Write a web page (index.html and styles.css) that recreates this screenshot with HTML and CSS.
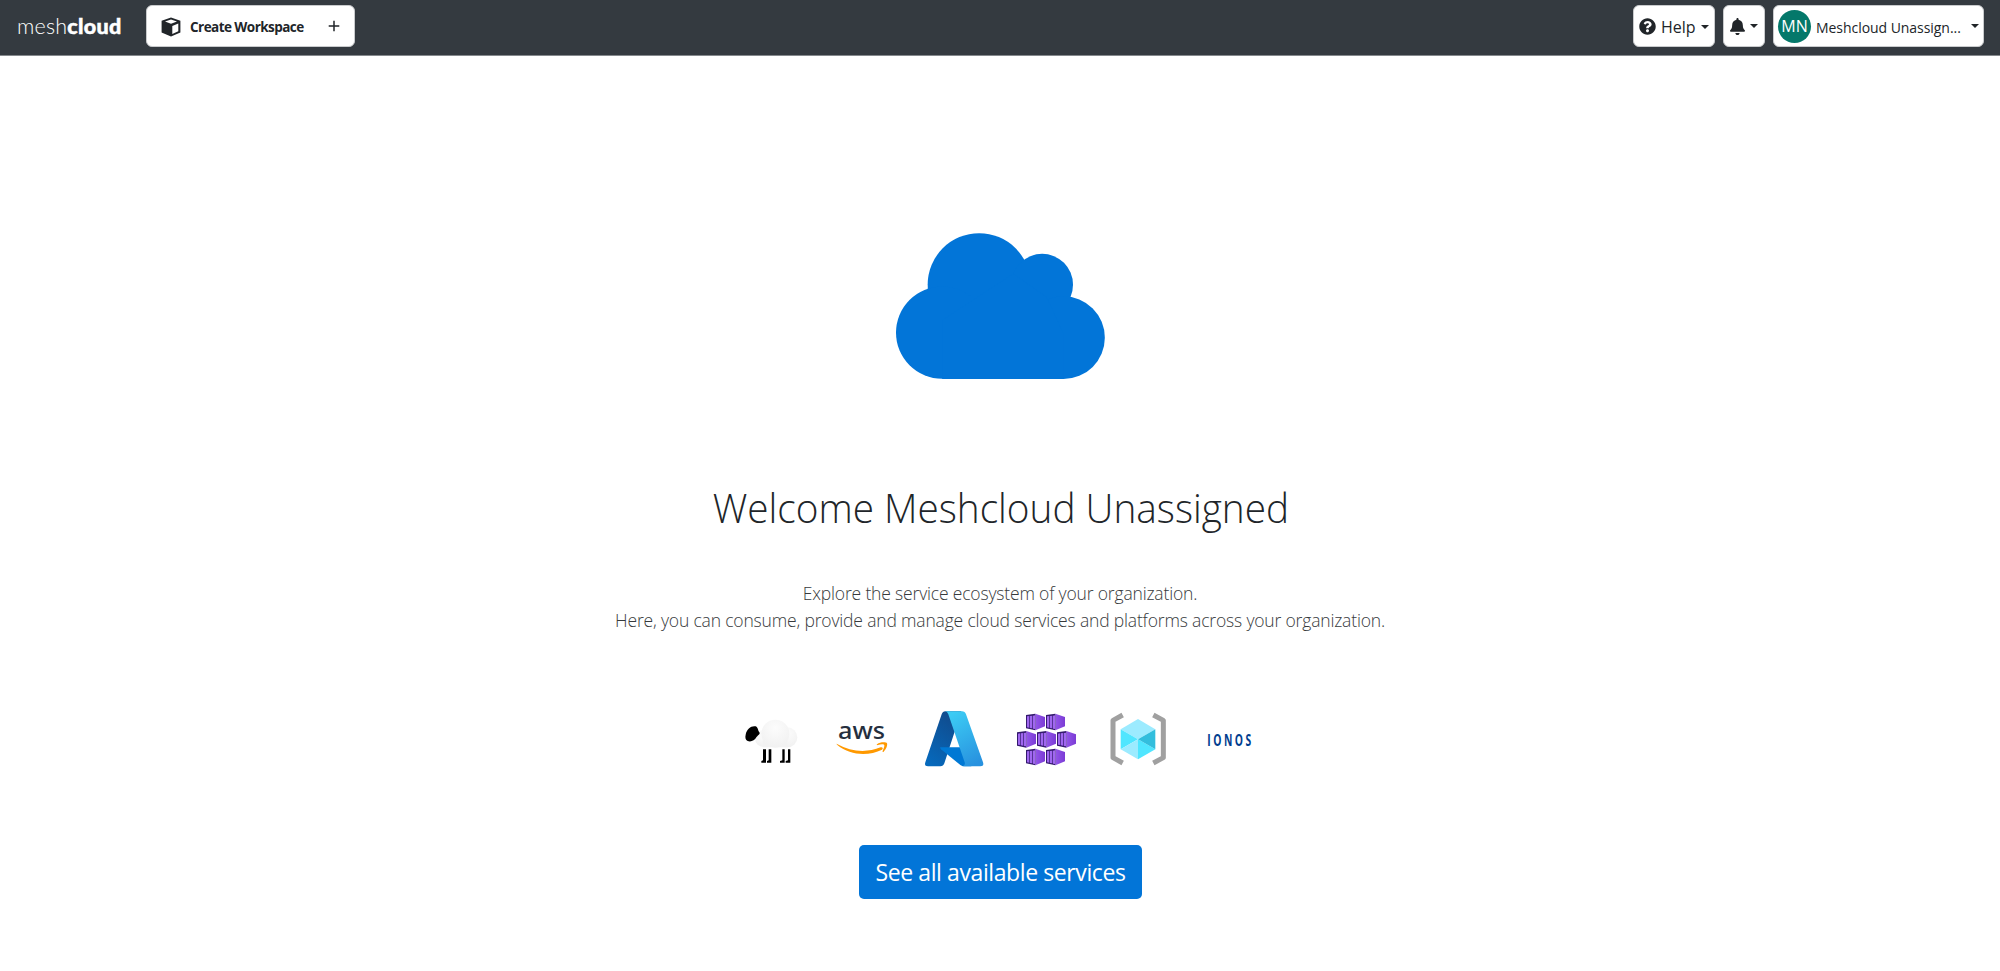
FILE: index.html
```html
<!DOCTYPE html>
<html lang="en">
<head>
<meta charset="utf-8">
<title>meshcloud</title>
<link rel="stylesheet" href="styles.css">
</head>
<body>
<header class="nav">
  <a class="logo"><span class="logo-thin">mesh</span><span class="logo-bold">cloud</span></a>
  <button class="chip workspace">
    <svg class="cube" viewBox="0 0 20 20"><path fill="#212529" d="M10 .6 19.4 3.800V15.600L10 19.500.6 15.600V3.800Z"/><path fill="#fff" d="M10 2.500 16 4.500 10 6.800 4 4.500ZM11.300 9 17.300 6.500V14.300L11.300 16.900Z"/></svg>
    <span class="workspace-label">Create Workspace</span>
    <svg class="plus" viewBox="0 0 12 12"><path d="M6 .7V11.300M.7 6H11.300" stroke="#212529" stroke-width="1.500"/></svg>
  </button>
  <div class="nav-right">
    <button class="chip help">
      <svg class="help-icon" viewBox="0 0 512 512"><path fill="#212529" d="M504 256c0 137-111 248-248 248S8 393 8 256C8 119.100 119 8 256 8s248 111.100 248 248zM262.700 90c-54.500 0-89.300 23-116.500 63.800-3.500 5.300-2.400 12.400 2.700 16.300l34.700 26.300c5.200 3.900 12.600 3 16.700-2.100 17.900-22.700 30.100-35.800 57.300-35.800 20.400 0 45.700 13.100 45.700 33 0 15-12.400 22.700-32.500 34C247 238.500 216 255 216 296v4c0 6.600 5.400 12 12 12h56c6.600 0 12-5.400 12-12v-1.300c0-28.800 84.200-30 84.200-108C380.200 132 319.200 90 262.700 90zM256 338c-25.400 0-46 20.600-46 46s20.600 46 46 46 46-20.600 46-46-20.600-46-46-46z"/></svg>
      <span class="help-label">Help</span><i class="caret"></i>
    </button>
    <button class="chip alerts">
      <svg class="bell" viewBox="0 0 448 512"><path fill="#212529" d="M224 512c35.300 0 63.900-28.700 63.900-64H160.100c0 35.300 28.600 64 63.900 64zm215.400-149.700c-19.300-20.800-55.500-52-55.500-154.300 0-77.700-54.500-139.900-127.900-155.200V32c0-17.700-14.300-32-32-32s-32 14.300-32 32v20.800C118.600 68.100 64.100 130.300 64.100 208c0 102.300-36.200 133.500-55.500 154.300C2.600 368.700 0 376.400 0 384c.1 16.400 13 32 32.100 32h383.800c19.100 0 32-15.600 32.100-32 0-7.600-2.600-15.300-8.600-21.700z"/></svg>
      <i class="caret"></i>
    </button>
    <button class="chip user">
      <span class="avatar">MN</span><span class="user-name">Meshcloud Unassign...</span><i class="caret"></i>
    </button>
  </div>
</header>
<main class="welcome">
  <svg class="cloud" viewBox="49 38 626 438" fill="#0275d8"><circle cx="298" cy="193" r="154.500"/><circle cx="487" cy="193" r="92.500"/><circle cx="187" cy="337" r="138.500"/><circle cx="551" cy="352" r="124"/><path d="M187 476V300L400 160L500 230L551 340V476Z"/></svg>
  <h1 class="title">Welcome Meshcloud Unassigned</h1>
  <p class="lead"><span class="line-one">Explore the service ecosystem of your organization.</span><br><span class="line-two">Here, you can consume, provide and manage cloud services and platforms across your organization.</span></p>
  <div class="platforms">
    <svg class="platform" viewBox="33 27 180 180">
      <defs><radialGradient id="wool" cx=".5" cy=".3" r=".7"><stop offset="0" stop-color="#fcfcfc"/><stop offset="1" stop-color="#f1f1f1"/></radialGradient></defs>
      <g fill="url(#wool)"><circle cx="172" cy="112" r="30"/><circle cx="100" cy="116" r="25"/><path d="M98 118H172V142H98Z" fill="#f2f2f2"/><circle cx="136" cy="101" r="42"/></g>
      <path d="M47 104C50 86 65 76 77 79C85 82 83 92 89 98C90 104 82 106 79 112C74 122 62 127 53 123C46 120 45 112 47 104Z"/>
      <path d="M99 148H108V188H94V183L99 181ZM116 148H124V188H111V183L116 181ZM157 148H164V188H150V183L157 181ZM174 148H181V188H167V183L174 181Z"/>
    </svg>
    <svg class="platform" viewBox="309 27 180 180">
      <text class="aws-word" x="327" y="117" textLength="141" lengthAdjust="spacingAndGlyphs">aws</text>
      <path fill="#f90" d="M324 132C367 156 413 159 455 142C460 140 464 145 459 149C420 168 365 168 325 135C322 132 322 130 324 132Z"/><path fill="#f90" d="M444 133C454 125 472 126 474 130C476 135 472 148 464 155C462 157 460 156 461 153C464 145 468 136 465 134C462 132 453 133 447 135C444 136 442 135 444 133Z"/>
    </svg>
    <svg class="platform" viewBox="43 27 180 180">
      <defs><linearGradient id="az1" x1=".7" y1="0" x2=".2" y2="1"><stop offset="0" stop-color="#114a8b"/><stop offset="1" stop-color="#0669bc"/></linearGradient><linearGradient id="az2" x1=".3" y1="0" x2=".7" y2="1"><stop offset="0" stop-color="#3ccbf4"/><stop offset="1" stop-color="#2892df"/></linearGradient></defs>
      <path fill="url(#az1)" d="M107 34H155L104 190Q101 199 92 199H55Q43 199 47 187L96 43Q99 34 107 34Z"/>
      <path fill="#0078d4" d="M92 142H171L185 199H164Q157 199 152 195L94 148Q90 142 92 142Z"/>
      <path fill="url(#az2)" d="M106 34H157Q166 34 169 43L220 187Q224 199 212 199H156Q168 196 165 187L116 43Q113 34 106 34Z"/>
    </svg>
    <svg class="platform" viewBox="318 27 180 180">
      <defs><linearGradient id="box" x1="0" x2="1"><stop offset="0" stop-color="#9256e8"/><stop offset="1" stop-color="#7b3bd5"/></linearGradient>
      <g id="container"><path fill="url(#box)" d="M28 0 57 10V38L28 50Z"/><path fill="#341a6e" d="M0 4 28 0V50L0 44Z"/><path fill="#a067f0" d="M3 8 10 7V42L3 41ZM12 7 19 6V44L12 43ZM21 6 27 5V46L21 45Z"/></g></defs>
      <use href="#container" x="348" y="41"/><use href="#container" x="408" y="41"/><use href="#container" x="321" y="93"/><use href="#container" x="381" y="93"/><use href="#container" x="441" y="93"/><use href="#container" x="348" y="146"/><use href="#container" x="408" y="146"/>
    </svg>
    <svg class="platform" viewBox="54 27 180 180">
      <path fill="none" stroke="#a0a0a0" stroke-width="15" stroke-linejoin="round" d="M98 45 69 61V173L98 189M190 45 220 61V173L190 189"/>
      <path fill="#9cebff" d="M144 57 196 88 144 118 92 88Z"/><path fill="#50e6ff" d="M92 88 144 118 92 148Z"/><path fill="#9cebff" d="M92 148 144 118V178Z"/><path fill="#50e6ff" d="M144 118 196 148 144 178Z"/><path fill="#32bedd" d="M196 88V148L144 118Z"/>
    </svg>
    <svg class="platform" viewBox="330 27 180 180">
      <text class="ionos-word" transform="translate(355 138) scale(.62 1)" textLength="212" lengthAdjust="spacing">IONOS</text>
    </svg>
  </div>
  <button class="cta"><span class="cta-label">See all available services</span></button>
</main>
</body>
</html>
```
FILE: styles.css
```css
* { box-sizing: border-box; }
body { margin: 0; background: #fff; color: #212529; font-family: "Open Sans", "Noto Sans", sans-serif; }
button { font: inherit; color: inherit; border: 0; padding: 0; }
.nav { height: 56px; padding: 5.400px 16px 0 17px; display: flex; align-items: flex-start; background: #343a40; border-bottom: 1px solid #85898d; }
.logo { width: 129px; height: 42px; display: flex; align-items: center; color: #fff; font: 21.500px/42px Lato, sans-serif; }
.logo-thin { font-weight: 300; letter-spacing: .2px; }
.logo-bold { font-weight: 900; letter-spacing: .3px; -webkit-text-stroke: .5px #fff; }
.chip { height: 42px; background: #fff; border: 1px solid #c9cbcd; border-radius: 6px; display: flex; align-items: center; white-space: nowrap; }
.workspace { width: 209px; padding: 1px 15px 0 14px; }
.cube { width: 20px; height: 20px; }
.workspace-label { margin-left: 9px; font-size: 13.500px; font-weight: 700; letter-spacing: -.550px; }
.plus { width: 12px; height: 12px; margin: 0 -1px 0 auto; position: relative; top: -1px; }
.nav-right { margin-left: auto; display: flex; gap: 8px; }
.caret { border: 4.500px solid transparent; border-top-color: #212529; border-bottom: 0; }
.help { width: 82px; padding: 1px 0 0 5px; }
.help-icon { width: 17px; height: 17px; }
.help-label { margin: 0 5px 0 5px; font-size: 16px; }
.alerts { width: 42px; padding-left: 6px; gap: 5px; }
.bell { width: 15px; height: 17px; }
.user { width: 211px; padding: 0 4px; }
.avatar { width: 33px; height: 33px; flex: none; border-radius: 50%; background: #04786a; color: #fff; font-size: 16px; line-height: 33px; text-align: center; }
.user-name { margin: 2px 0 0 5px; font-size: 14px; font-weight: 500; letter-spacing: -.050px; }
.user .caret { margin-left: auto; }
.welcome { display: flex; flex-direction: column; align-items: center; padding-top: 177px; }
.cloud { width: 209px; height: 146px; margin-left: 1px; }
.title { margin: 98px 0 0; padding-left: 1px; font-size: 41px; line-height: 60px; font-weight: 300; white-space: nowrap; transform: scaleX(.945); }
.lead { margin: 43px 0 0; font-size: 17.500px; line-height: 27px; font-weight: 300; color: #373a3c; letter-spacing: -.170px; text-align: center; white-space: nowrap; }
.platforms { margin-top: 75px; display: flex; gap: 31.800px; }
.platform { width: 60px; height: 60px; }
.aws-word { font: 500 70px "Noto Sans", sans-serif; fill: #252f3e; }
.ionos-word { font: 700 50px "Open Sans", sans-serif; fill: #003d8f; }
.cta { margin-top: 76px; width: 283px; height: 54px; padding-left: 1px; background: #0275d8; border-radius: 5px; color: #fff; font-size: 23px; letter-spacing: -.400px; white-space: nowrap; }
```
